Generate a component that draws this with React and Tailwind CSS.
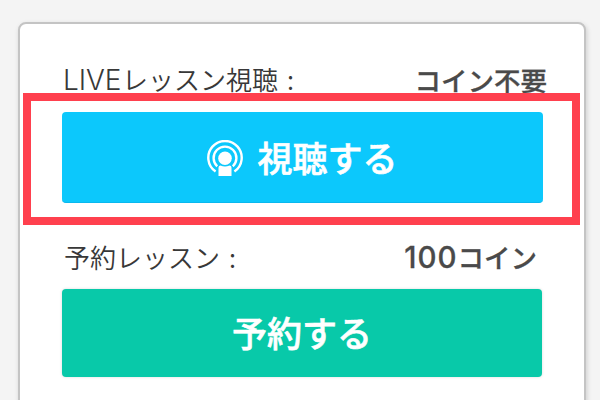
import React from 'react';

function BroadcastIcon() {
  return (
    <svg className="w-9 h-9 shrink-0" viewBox="0 0 36 36" fill="none" stroke="white" strokeWidth="2.4">
      <path d="M8.6 31.5A16.7 16.7 0 1 1 27.4 31.5" />
      <path d="M10.2 26.3A11.4 11.4 0 1 1 25.8 26.3" />
      <circle cx="18" cy="18.3" r="6.8" fill="white" stroke="none" />
      <path d="M11.5 36V27.5q0-2 2-2q4.500 2 9 0q2 0 2 2V36z" fill="white" stroke="none" />
    </svg>
  );
}

function PriceRow({ label, price, className }) {
  return (
    <div className={`flex justify-between items-center ${className}`}>
      <span className="flex items-baseline text-[26px] leading-10 font-[350] text-[#383838] whitespace-nowrap">
        {label}
      </span>
      <span className="flex items-baseline text-[26.5px] leading-10 font-medium text-[#4a4a4a] [-webkit-text-stroke:0.3px_#4a4a4a] whitespace-nowrap">
        {price}
      </span>
    </div>
  );
}

export default function App() {
  return (
    <div className="w-[600px] h-[400px] overflow-hidden bg-[#f4f4f4] pt-[22px] pl-[18px] font-['Noto_Sans_CJK_JP',sans-serif]">
      <div className="w-[568px] h-[400px] rounded-lg border-2 border-[#c4c4c4] bg-white pt-9 shadow-[1px_2px_5px_rgba(0,0,0,0.16)]">
        <PriceRow
          label={
            <>
              <span className="w-[59px] font-['Inter'] font-light text-[28px] tracking-[-0.1px]">LIVE</span>
              <span>レッスン視聴</span>
              <span className="ml-[9px]">:</span>
            </>
          }
          price="コイン不要"
          className="relative top-[3px] h-[33px] pl-[43px] pr-[37px]"
        />
        {/* highlight frame around the watch button */}
        <div className="relative ml-[3px] w-[557px] h-[132px] border-8 border-[#ff404e] pt-[11px] pl-[31px]">
          <button className="flex w-[481px] h-[91px] items-center justify-center gap-[14px] rounded border-b border-[#0ab8ee] bg-[#0cc8fc] pt-px text-white text-[35px] font-medium [-webkit-text-stroke:0.6px_white]">
            <BroadcastIcon />
            <span>視聴する</span>
          </button>
        </div>
        <PriceRow
          label={
            <>
              <span>予約レッスン</span>
              <span className="ml-[9px]">:</span>
            </>
          }
          price={
            <>
              <span className="font-['Inter'] text-[29.5px] tracking-[1px]">100</span>
              <span>コイン</span>
            </>
          }
          className="h-[64px] pl-[44px] pr-[47px]"
        />
        <button className="ml-[42px] w-[480px] h-[88px] rounded bg-[#08c9a9] pb-px text-white text-[35px] font-medium [-webkit-text-stroke:0.6px_white] shadow-[0_0_3px_rgba(0,0,0,0.15)]">
          予約する
        </button>
      </div>
    </div>
  );
}
